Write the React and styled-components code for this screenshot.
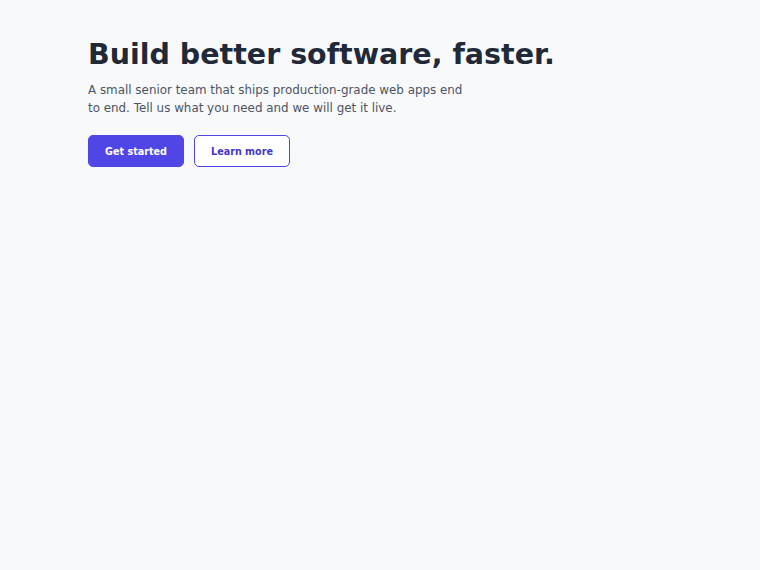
import styled, { createGlobalStyle } from "styled-components";

const GlobalStyle = createGlobalStyle`
  html, body {
    margin: 0;
    padding: 0;
    background: #f8f9fb;
    font-family: "DejaVu Sans", sans-serif;
  }
`;

const Hero = styled.section`
  padding: 37px 88px;
  display: flex;
  flex-direction: column;
  align-items: flex-start;
`;

const Title = styled.h1`
  margin: 0;
  font-size: 28.5px;
  line-height: 36px;
  font-weight: 700;
  color: #1f2937;
`;

const Lead = styled.p`
  margin: 8px 0 0;
  max-width: 380px;
  font-size: 11.9px;
  line-height: 18px;
  color: #4b5563;
`;

const Actions = styled.div`
  display: flex;
  gap: 10px;
  margin-top: 18px;
`;

const Button = styled.button`
  width: 96px;
  height: 32px;
  border-radius: 5px;
  font-family: inherit;
  font-size: 9.6px;
  font-weight: 700;
  cursor: pointer;
  border: 1.5px solid #4f46e5;
  background: ${(p) => (p.$primary ? "#4f46e5" : "#ffffff")};
  color: ${(p) => (p.$primary ? "#ffffff" : "#4338ca")};
`;

const App = () => (
  <>
    <GlobalStyle />
    <Hero>
      <Title>Build better software, faster.</Title>
      <Lead>
        A small senior team that ships production-grade web apps end to end.
        Tell us what you need and we will get it live.
      </Lead>
      <Actions>
        <Button $primary>Get started</Button>
        <Button>Learn more</Button>
      </Actions>
    </Hero>
  </>
);

export default App;
